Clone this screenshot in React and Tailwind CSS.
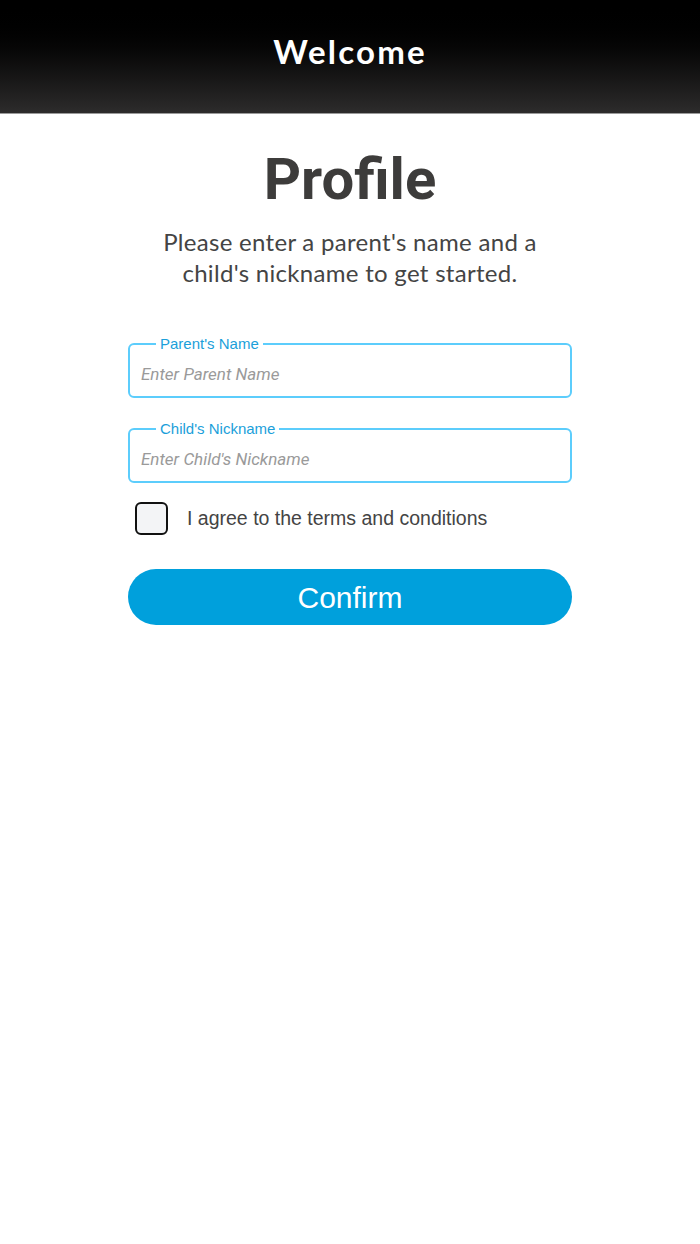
import { useState } from 'react';

const ProfileForm = () => {
  const [parentName, setParentName] = useState('');
  const [nickname, setNickname] = useState('');
  const [agreed, setAgreed] = useState(false);

  return (
    <div className="min-h-[1244px] bg-white">
      <header className="h-[114px] flex items-center justify-center bg-gradient-to-b from-[#000000] to-[#2d2c2c] border-b border-[#9a9a9a]">
        <h1 className="text-white text-[33px] font-bold tracking-[2.2px] pb-[10px]" style={{ fontFamily: 'Lato, sans-serif' }}>
          Welcome
        </h1>
      </header>

      <main className="flex flex-col items-center">
        <h2 className="mt-[30px] text-[58px] leading-[70px] font-bold text-[#3d3c3b]" style={{ fontFamily: 'Roboto, sans-serif' }}>
          Profile
        </h2>
        <p className="mt-[12px] text-center text-[24px] leading-[31px] tracking-[0.3px] text-[#444444]" style={{ fontFamily: 'Lato, sans-serif' }}>
          Please enter a parent's name and a<br />child's nickname to get started.
        </p>

        <form className="mt-[55px] w-[444px] flex flex-col" style={{ fontFamily: 'Roboto, Arial, sans-serif' }}>
          <div className="relative">
            <span className="absolute left-[28px] -top-[8px] bg-white px-[4px] text-[15px] leading-[18px] text-[#1ba0da]" style={{ fontFamily: 'Arial, "Liberation Sans", sans-serif' }}>Parent's Name</span>
            <input
              type="text"
              value={parentName}
              onChange={(e) => setParentName(e.target.value)}
              placeholder="Enter Parent Name"
              className="w-full h-[55px] rounded-[6px] border-2 border-[#5ccdfc] px-[11px] pt-[6px] text-[17px] italic text-[#333] placeholder:text-[#9a9a9a] outline-none"
            />
          </div>

          <div className="relative mt-[30px]">
            <span className="absolute left-[28px] -top-[8px] bg-white px-[4px] text-[15px] leading-[18px] text-[#1ba0da]" style={{ fontFamily: 'Arial, "Liberation Sans", sans-serif' }}>Child's Nickname</span>
            <input
              type="text"
              value={nickname}
              onChange={(e) => setNickname(e.target.value)}
              placeholder="Enter Child's Nickname"
              className="w-full h-[55px] rounded-[6px] border-2 border-[#5ccdfc] px-[11px] pt-[6px] text-[17px] italic text-[#333] placeholder:text-[#9a9a9a] outline-none"
            />
          </div>

          <label className="mt-[19px] ml-[7px] flex items-center gap-[19px] cursor-pointer">
            <span
              onClick={() => setAgreed(!agreed)}
              className="w-[33px] h-[33px] rounded-[6px] border-2 border-[#111] bg-[#f3f4f6] flex items-center justify-center"
            >
              {agreed && <span className="text-[20px] leading-none text-[#111]">✓</span>}
            </span>
            <span className="text-[19.5px] text-[#444444]" style={{ fontFamily: 'Arial, "Liberation Sans", sans-serif' }}>
              I agree to the terms and conditions
            </span>
          </label>

          <button
            type="button"
            className="mt-[34px] h-[56px] w-full rounded-full bg-[#00a0dc] text-white text-[30px]"
            style={{ fontFamily: 'Arial, "Liberation Sans", sans-serif' }}
          >
            Confirm
          </button>
        </form>
      </main>
    </div>
  );
};

export default function App() {
  return <ProfileForm />;
}
